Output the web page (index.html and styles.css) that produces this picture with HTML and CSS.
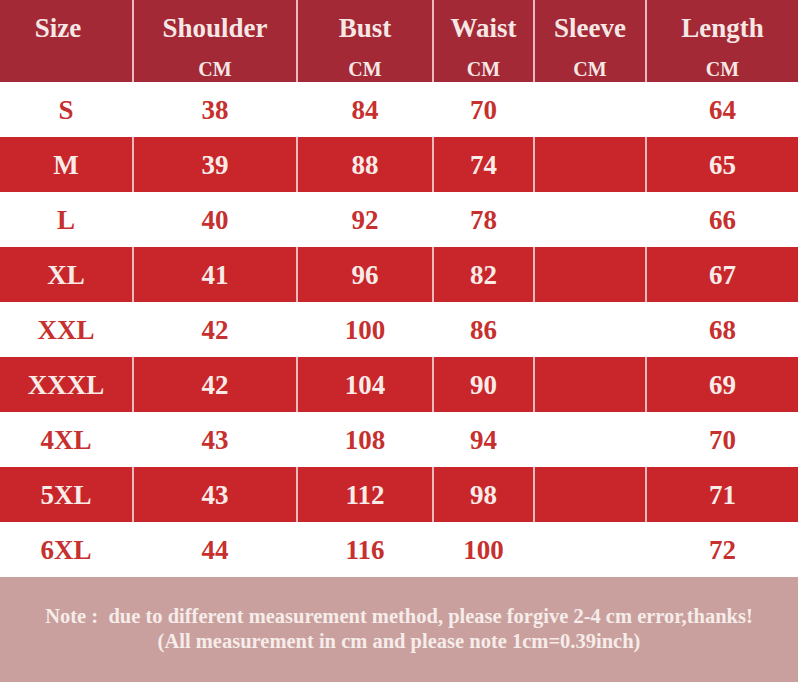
FILE: index.html
```html
<!DOCTYPE html>
<html>
<head>
<meta charset="utf-8">
<link rel="stylesheet" href="styles.css">
</head>
<body>
<div class="chart">
  <div class="grid">
    <div class="cell head size-head"><div class="title">Size</div></div>
    <div class="cell head"><div class="title">Shoulder</div><div class="unit">CM</div></div>
    <div class="cell head"><div class="title">Bust</div><div class="unit">CM</div></div>
    <div class="cell head"><div class="title">Waist</div><div class="unit">CM</div></div>
    <div class="cell head"><div class="title">Sleeve</div><div class="unit">CM</div></div>
    <div class="cell head"><div class="title">Length</div><div class="unit">CM</div></div>

    <div class="cell light first">S</div><div class="cell light">38</div><div class="cell light">84</div><div class="cell light">70</div><div class="cell light"></div><div class="cell light">64</div>
    <div class="cell red first">M</div><div class="cell red">39</div><div class="cell red">88</div><div class="cell red">74</div><div class="cell red"></div><div class="cell red">65</div>
    <div class="cell light first">L</div><div class="cell light">40</div><div class="cell light">92</div><div class="cell light">78</div><div class="cell light"></div><div class="cell light">66</div>
    <div class="cell red first">XL</div><div class="cell red">41</div><div class="cell red">96</div><div class="cell red">82</div><div class="cell red"></div><div class="cell red">67</div>
    <div class="cell light first">XXL</div><div class="cell light">42</div><div class="cell light">100</div><div class="cell light">86</div><div class="cell light"></div><div class="cell light">68</div>
    <div class="cell red first">XXXL</div><div class="cell red">42</div><div class="cell red">104</div><div class="cell red">90</div><div class="cell red"></div><div class="cell red">69</div>
    <div class="cell light first">4XL</div><div class="cell light">43</div><div class="cell light">108</div><div class="cell light">94</div><div class="cell light"></div><div class="cell light">70</div>
    <div class="cell red first">5XL</div><div class="cell red">43</div><div class="cell red">112</div><div class="cell red">98</div><div class="cell red"></div><div class="cell red">71</div>
    <div class="cell light first">6XL</div><div class="cell light">44</div><div class="cell light">116</div><div class="cell light">100</div><div class="cell light"></div><div class="cell light">72</div>
  </div>
  <div class="note">
    <div class="line">Note :&nbsp; due to different measurement method, please forgive 2-4 cm error,thanks!</div>
    <div class="line">(All measurement in cm and please note 1cm=0.39inch)</div>
  </div>
</div>
</body>
</html>
```

FILE: styles.css
```css
html, body {
  margin: 0;
  padding: 0;
  background: #ffffff;
}
body {
  width: 800px;
  height: 682px;
  overflow: hidden;
  font-family: "Liberation Serif", "Times New Roman", serif;
  font-weight: bold;
}
.chart {
  width: 798px;
}
.grid {
  display: grid;
  grid-template-columns: 132px 164px 136px 101px 112px 153px;
  grid-template-rows: 82px repeat(9, 55px);
}
.cell {
  box-sizing: border-box;
  text-align: center;
  border-left: 2px solid #eab9bd;
}
.cell:nth-child(6n+1) {
  border-left: none;
}
.head {
  background: #a22935;
  color: #f6e7e5;
  padding-top: 13px;
}
.size-head {
  padding-right: 16px;
}
.title {
  font-size: 27px;
  line-height: 30px;
}
.unit {
  font-size: 20px;
  line-height: 24px;
  margin-top: 14px;
}
.light, .red {
  font-size: 27px;
  line-height: 55px;
  padding-top: 1px;
}
.light {
  background: #ffffff;
  color: #c6302e;
  border-left-color: #ffffff;
}
.red {
  background: #c8262a;
  color: #f8ebe8;
}
.note {
  height: 105px;
  box-sizing: border-box;
  background: #c9a09e;
  color: #f6ece9;
  padding-top: 27px;
  font-size: 20.5px;
  line-height: 25px;
  text-align: center;
}
```
